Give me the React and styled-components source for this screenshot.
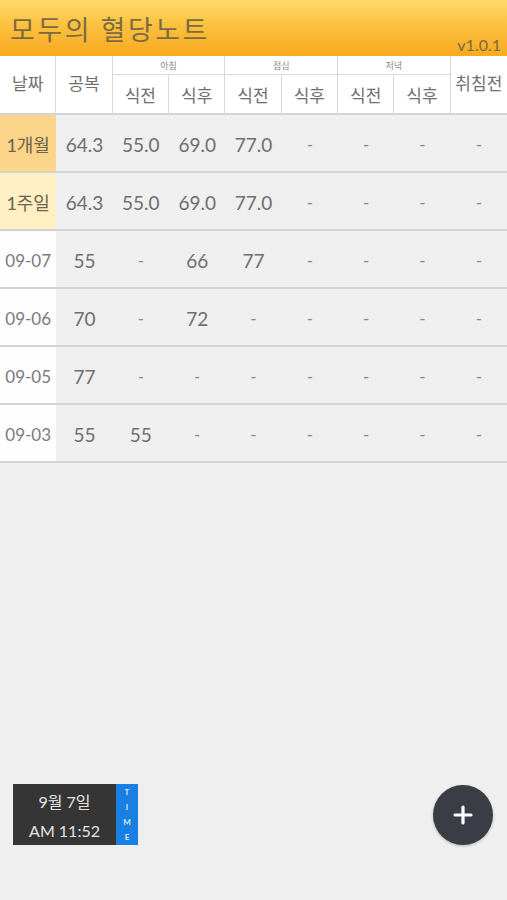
import styled, { createGlobalStyle } from "styled-components";

const GlobalStyle = createGlobalStyle`
    html, body {
        margin: 0;
        padding: 0;
        background: #efefef;
    }
    body {
        font-family: "Lato", "Noto Sans CJK KR", sans-serif;
    }
`;

const rows = [
    { date: "1개월", tone: "month", values: ["64.3", "55.0", "69.0", "77.0", "-", "-", "-", "-"] },
    { date: "1주일", tone: "week", values: ["64.3", "55.0", "69.0", "77.0", "-", "-", "-", "-"] },
    { date: "09-07", tone: "day", values: ["55", "-", "66", "77", "-", "-", "-", "-"] },
    { date: "09-06", tone: "day", values: ["70", "-", "72", "-", "-", "-", "-", "-"] },
    { date: "09-05", tone: "day", values: ["77", "-", "-", "-", "-", "-", "-", "-"] },
    { date: "09-03", tone: "day", values: ["55", "55", "-", "-", "-", "-", "-", "-"] },
];

const meals = ["아침", "점심", "저녁"];

function App() {
    return (
        <Page>
            <GlobalStyle />
            <TopBar>
                <Title>모두의 혈당노트</Title>
                <Version>v1.0.1</Version>
            </TopBar>

            <HeadGrid>
                <HeadCell $col={1}>날짜</HeadCell>
                <HeadCell $col={2}>공복</HeadCell>
                {meals.map((m, i) => (
                    <MealLabel key={m} $col={3 + i * 2}>{m}</MealLabel>
                ))}
                <HeadCell $col={9} $last>취침전</HeadCell>
                {meals.map((m, i) => [
                    <SubCell key={m + "a"} $col={3 + i * 2}>식전</SubCell>,
                    <SubCell key={m + "b"} $col={4 + i * 2}>식후</SubCell>,
                ])}
            </HeadGrid>

            {rows.map((r) => (
                <Row key={r.date}>
                    <DateCell $tone={r.tone}>{r.date}</DateCell>
                    {r.values.map((v, i) => (
                        <ValueCell key={i} $dash={v === "-"}>{v}</ValueCell>
                    ))}
                </Row>
            ))}

            <Spacer />

            <Footer>
                <Clock>
                    <ClockText>
                        <span>9월 7일</span>
                        <span>AM 11:52</span>
                    </ClockText>
                    <ClockTag>
                        <span>T</span>
                        <span>I</span>
                        <span>M</span>
                        <span>E</span>
                    </ClockTag>
                </Clock>
                <Fab>
                    <svg width="22" height="22" viewBox="0 0 22 22">
                        <path d="M11 3v16M3 11h16" stroke="#fff" strokeWidth="3.2" strokeLinecap="round" />
                    </svg>
                </Fab>
            </Footer>
        </Page>
    );
}

const Page = styled.div`
    width: 507px;
    height: 900px;
    display: flex;
    flex-direction: column;
    background: #efefef;
    overflow: hidden;
`;

const TopBar = styled.div`
    height: 56px;
    flex-shrink: 0;
    box-sizing: border-box;
    padding: 0 6px 0 10px;
    display: flex;
    justify-content: space-between;
    align-items: flex-end;
    background: linear-gradient(180deg, #ffdc6a 0%, #fcc13f 45%, #f8a920 100%);
`;

const Title = styled.div`
    font-family: "Noto Sans CJK KR", sans-serif;
    font-size: 27px;
    color: #7b6a44;
    letter-spacing: 2.5px;
    margin-bottom: 8px;
`;

const Version = styled.div`
    font-family: "Lato", sans-serif;
    font-size: 16px;
    color: #7b6a44;
    margin-bottom: 2px;
`;

const HeadGrid = styled.div`
    display: grid;
    grid-template-columns: repeat(9, 1fr);
    grid-template-rows: 19px 38px;
    background: #fff;
    border-bottom: 2px solid #d4d4d4;
    flex-shrink: 0;
`;

const HeadCell = styled.div`
    grid-row: 1 / span 2;
    grid-column: ${(p) => p.$col};
    display: flex;
    align-items: center;
    justify-content: center;
    font-family: "Noto Sans CJK KR", sans-serif;
    font-size: 17px;
    color: #6f6f6f;
    border-right: ${(p) => (p.$last ? "none" : "1px solid #d8d8d8")};
    padding-bottom: 4px;
`;

const MealLabel = styled.div`
    grid-row: 1;
    grid-column: ${(p) => p.$col} / span 2;
    display: flex;
    align-items: center;
    justify-content: center;
    font-family: "Noto Sans CJK KR", sans-serif;
    font-size: 9px;
    color: #888;
    border-right: 1px solid #d8d8d8;
    border-bottom: 1px solid #d8d8d8;
`;

const SubCell = styled.div`
    grid-row: 2;
    grid-column: ${(p) => p.$col};
    display: flex;
    align-items: center;
    justify-content: center;
    font-family: "Noto Sans CJK KR", sans-serif;
    font-size: 17px;
    color: #6f6f6f;
    border-right: 1px solid #d8d8d8;
`;

const Row = styled.div`
    display: grid;
    grid-template-columns: repeat(9, 1fr);
    height: 56px;
    border-bottom: 2px solid #d2d2d2;
    flex-shrink: 0;
`;

const toneColors = {
    month: "#fbd58a",
    week: "#fff0c3",
    day: "#fefefe",
};

const DateCell = styled.div`
    display: flex;
    align-items: center;
    justify-content: center;
    background: ${(p) => toneColors[p.$tone]};
    font-family: "Lato", "Noto Sans CJK KR", sans-serif;
    font-size: ${(p) => (p.$tone === "day" ? "17px" : "18px")};
    color: ${(p) => (p.$tone === "day" ? "#7a7a7a" : "#6c6250")};
    padding-top: 2px;
`;

const ValueCell = styled.div`
    display: flex;
    align-items: center;
    justify-content: center;
    font-family: "Lato", sans-serif;
    font-size: ${(p) => (p.$dash ? "17px" : "19px")};
    color: ${(p) => (p.$dash ? "#8a8a8a" : "#6e6e6e")};
    padding-top: 2px;
`;

const Spacer = styled.div`
    flex: 1;
`;

const Footer = styled.div`
    display: flex;
    justify-content: space-between;
    align-items: center;
    padding: 0 14px 55px 13px;
`;

const Clock = styled.div`
    display: flex;
    height: 61px;
`;

const ClockText = styled.div`
    width: 103px;
    background: #353535;
    display: flex;
    flex-direction: column;
    justify-content: center;
    align-items: center;
    gap: 8px;
    font-family: "Lato", "Noto Sans CJK KR", sans-serif;
    font-size: 16px;
    color: #e4e4e4;
`;

const ClockTag = styled.div`
    width: 22px;
    background: #1a7fe3;
    display: flex;
    flex-direction: column;
    justify-content: center;
    align-items: center;
    gap: 5px;
    font-family: "Lato", sans-serif;
    font-size: 8px;
    font-weight: 700;
    color: #d8ecff;
`;

const Fab = styled.div`
    width: 60px;
    height: 60px;
    border-radius: 50%;
    background: #3a3d46;
    display: flex;
    align-items: center;
    justify-content: center;
    box-shadow: 0 1px 3px rgba(0, 0, 0, 0.25);
`;

export default App;
